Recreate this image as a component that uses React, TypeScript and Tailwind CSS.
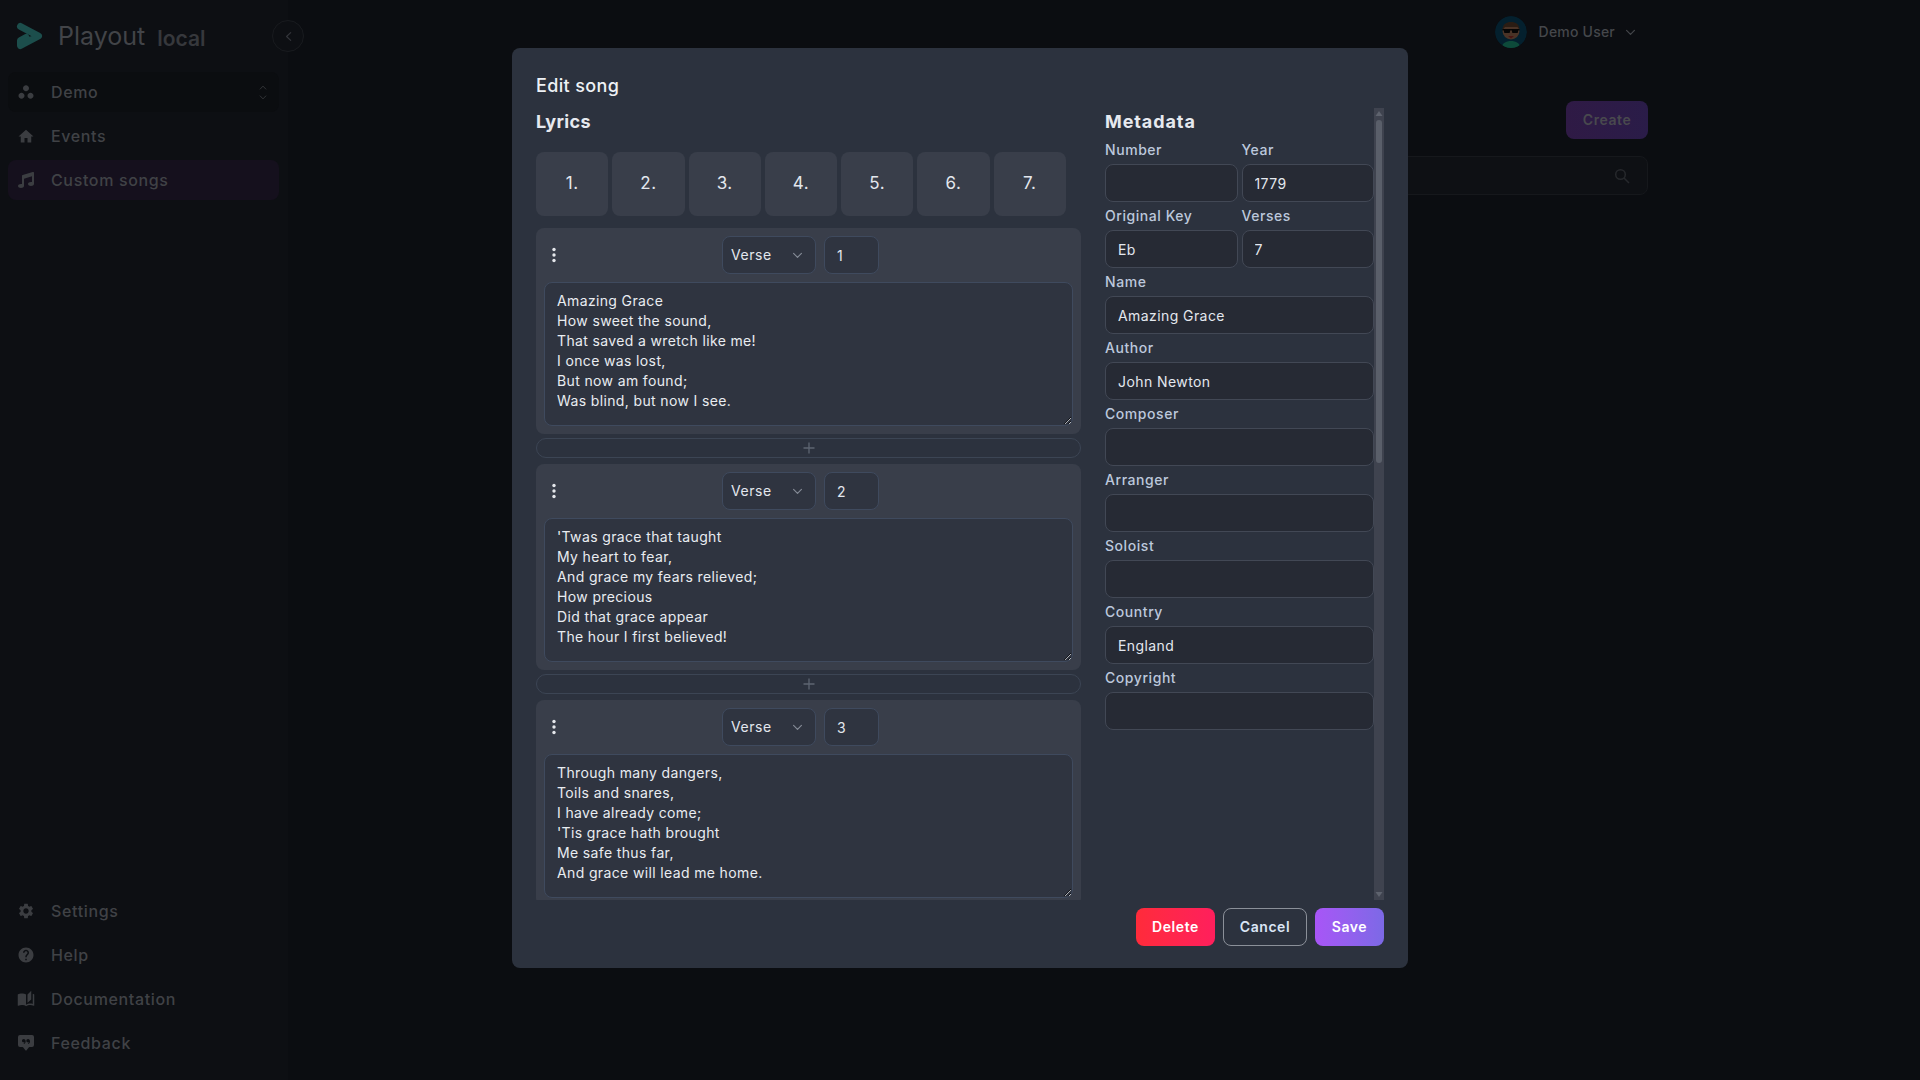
import React from "react";
import { MdWorkspaces, MdHome, MdSettings, MdHelp, MdAutoStories } from "react-icons/md";
import { FaMusic } from "react-icons/fa";
import { BsChatSquareQuoteFill } from "react-icons/bs";

const verses = [
  { n: "1", text: "Amazing Grace\nHow sweet the sound,\nThat saved a wretch like me!\nI once was lost,\nBut now am found;\nWas blind, but now I see." },
  { n: "2", text: "'Twas grace that taught\nMy heart to fear,\nAnd grace my fears relieved;\nHow precious\nDid that grace appear\nThe hour I first believed!" },
  { n: "3", text: "Through many dangers,\nToils and snares,\nI have already come;\n'Tis grace hath brought\nMe safe thus far,\nAnd grace will lead me home." },
];

function Chevron({ className }: { className: string }) {
  return (
    <svg viewBox="0 0 12 8" fill="none" stroke="currentColor" strokeWidth="1.3" strokeLinecap="round" strokeLinejoin="round" className={className}>
      <path d="M1.5 1.5 6 6.2l4.5-4.7" />
    </svg>
  );
}

function Logo() {
  return (
    <svg viewBox="0 0 28 28" className="h-7 w-7 shrink-0">
      <path d="M4.500 4.500 22.500 14 4.500 23.500V18.500L10 15.500" fill="none" stroke="#1c4e4c" strokeWidth="7" strokeLinecap="round" strokeLinejoin="round" />
    </svg>
  );
}

function Avatar() {
  return (
    <svg viewBox="0 0 32 32" className="h-8 w-8 rounded-full">
      <circle cx="16" cy="16" r="16" fill="#04202e" />
      <path d="M7 32c0-5 4-7 9-7s9 2 9 7Z" fill="#0d4a3a" />
      <circle cx="16" cy="15" r="8.500" fill="#4a3326" />
      <path d="M7.500 14c0-6 4-8 8.500-8s8.500 2 8.500 8l-2-3H10Z" fill="#2a1c13" />
      <rect x="7.500" y="13" width="17" height="1.500" fill="#050505" />
      <rect x="9" y="13" width="6" height="4" rx="1" fill="#050505" />
      <rect x="17" y="13" width="6" height="4" rx="1" fill="#050505" />
      <path d="M13 20h6l-3 2.500Z" fill="#4a1512" />
    </svg>
  );
}

function NavItem({ icon, label, active, dark, trailing }: { icon: React.ReactNode; label: string; active?: boolean; dark?: boolean; trailing?: React.ReactNode }) {
  return (
    <div className={`mx-2 flex h-10 w-[271px] items-center gap-4 rounded-lg px-[9px] text-base font-medium tracking-[0.04em] text-[#404246] ${active ? "bg-[#15101d]" : ""} ${dark ? "bg-[#0b0d10]" : ""}`}>
      <span className="flex w-[18px] shrink-0 justify-center text-[#3b3d41]">{icon}</span>
      <span className="flex-1">{label}</span>
      {trailing}
    </div>
  );
}

function Field({ label, value, className }: { label: string; value?: string; className?: string }) {
  return (
    <label className={`block ${className ?? ""}`}>
      <span className="flex h-7 items-center text-sm font-medium text-[#bcc8dc]">{label}</span>
      <input
        readOnly
        defaultValue={value ?? ""}
        className="block h-[38px] w-full rounded-lg border border-[#424855] bg-[#262a34] px-3 text-sm tracking-[0.03em] text-[#e3e7ee] outline-none"
      />
    </label>
  );
}

function VerseCard({ n, text }: { n: string; text: string }) {
  return (
    <div className="h-[206px] shrink-0 rounded-lg bg-[#393e4a] p-2">
      <div className="flex h-[38px] items-center">
        <div className="w-[178px] pl-[2px]">
          <svg viewBox="0 0 16 16" className="h-4 w-4 text-[#e5e7eb]" fill="currentColor">
            <circle cx="8" cy="2.500" r="1.700" />
            <circle cx="8" cy="8" r="1.700" />
            <circle cx="8" cy="13.500" r="1.700" />
          </svg>
        </div>
        <div className="flex h-[38px] w-[94px] items-center justify-between rounded-lg border border-[#3f4a5e] bg-[#2f3440] pl-[8px] pr-[12px] text-sm text-[#e3e7ee]">
          <span>Verse</span>
          <Chevron className="h-[7px] w-[11px] text-[#858b96]" />
        </div>
        <input
          readOnly
          defaultValue={n}
          className="ml-2 h-[38px] w-[55px] rounded-lg border border-[#3f4a5e] bg-[#2f3440] px-3 text-sm text-[#e3e7ee] outline-none"
        />
      </div>
      <textarea
        readOnly
        defaultValue={text}
        className="mt-2 block h-[144px] w-full resize-y rounded-lg border border-[#3f4a5e] bg-[#2f3440] px-3 py-2 text-sm leading-5 tracking-[0.026em] text-[#e9ecf1] outline-none"
      />
    </div>
  );
}

function AddRow() {
  return (
    <div className="mb-1.5 mt-1 flex h-5 shrink-0 items-center justify-center rounded-[10px] border border-[#3c4554]">
      <svg viewBox="0 0 12 12" className="h-3 w-3 text-[#5d6572]" fill="none" stroke="currentColor" strokeWidth="1.300">
        <path d="M6 .5v11M.5 6h11" />
      </svg>
    </div>
  );
}

export default function App() {
  return (
    <div className="relative flex h-screen w-screen overflow-hidden bg-[#0b0d11] font-['Inter',sans-serif] tracking-[0.035em]">
      <aside className="flex h-full w-[288px] shrink-0 flex-col bg-[#0d0f13] pb-[17px]">
        <div className="relative flex h-[72px] items-center pl-4">
          <Logo />
          <span className="ml-[14px] mt-[2px] text-[25px] font-normal tracking-normal text-[#424448]">Playout</span>
          <span className="ml-3 mt-[6px] text-[21px] font-semibold tracking-normal text-[#36383c]">local</span>
          <span className="absolute left-[272px] top-[20px] flex h-8 w-8 items-center justify-center rounded-full border border-[#191b1f] bg-[#0d0f13] text-[#33353a]">
            <Chevron className="h-[7px] w-[11px] rotate-90" />
          </span>
        </div>
        <div className="flex flex-1 flex-col gap-1">
          <NavItem
            dark
            icon={<MdWorkspaces size={20} />}
            label="Demo"
            trailing={
              <span className="mr-[3px] flex flex-col gap-[5px] text-[#3b3d41]">
                <Chevron className="h-[5px] w-2 rotate-180" />
                <Chevron className="h-[5px] w-2" />
              </span>
            }
          />
          <NavItem icon={<MdHome size={19} />} label="Events" />
          <NavItem active icon={<FaMusic size={16} />} label="Custom songs" />
        </div>
        <div className="flex flex-col gap-1">
          <NavItem icon={<MdSettings size={20} />} label="Settings" />
          <NavItem icon={<MdHelp size={20} />} label="Help" />
          <NavItem icon={<MdAutoStories size={20} />} label="Documentation" />
          <NavItem icon={<BsChatSquareQuoteFill size={16} />} label="Feedback" />
        </div>
      </aside>

      <main className="ml-6 w-[1336px]">
        <div className="flex h-[64px] items-center justify-end pr-[12px]">
          <Avatar />
          <span className="ml-[12px] text-sm font-medium tracking-[0.015em] text-[#45474b]">Demo User</span>
          <Chevron className="ml-[10px] h-[7px] w-[11px] text-[#45474b]" />
        </div>
        <div className="mt-[37px] flex justify-end">
          <div className="flex h-[38px] w-[82px] items-center justify-center rounded-lg bg-gradient-to-r from-[#2f1a45] to-[#2a1c48] text-sm font-semibold text-[#49494e]">
            Create
          </div>
        </div>
        <div className="ml-[400px] mt-[17px] flex h-[39px] items-center justify-end rounded-lg border border-[#16181c] bg-[#0e1014] pr-[17px] text-[#26282c]">
          <svg viewBox="0 0 16 16" className="h-4 w-4" fill="none" stroke="currentColor" strokeWidth="1.500">
            <circle cx="6.500" cy="6.500" r="4.800" />
            <path d="m10 10 5 5" />
          </svg>
        </div>
      </main>

      <div className="absolute inset-0 flex items-start justify-center pt-12">
        <div className="flex h-[920px] w-[896px] flex-col rounded-lg bg-[#2c323e] p-6">
          <h2 className="h-7 text-lg font-medium leading-7 tracking-[0.02em] text-[#eef1f5]">Edit song</h2>
          <div className="mt-2 flex h-[792px] gap-6">
            <div className="flex w-[545px] flex-col">
              <h3 className="h-7 text-lg font-bold leading-7 tracking-[0.02em] text-[#e6e9ef]">Lyrics</h3>
              <div className="mt-4 flex w-[530px] gap-1">
                {["1.", "2.", "3.", "4.", "5.", "6.", "7."].map((t) => (
                  <div key={t} className="flex h-16 flex-1 items-center justify-center rounded-lg bg-[#393e4a] text-[17px] text-[#e3e7ee]">
                    {t}
                  </div>
                ))}
              </div>
              <div className="mt-3 flex h-[672px] flex-col overflow-hidden">
                {verses.map((v, i) => (
                  <React.Fragment key={v.n}>
                    <VerseCard n={v.n} text={v.text} />
                    {i < verses.length - 1 && <AddRow />}
                  </React.Fragment>
                ))}
              </div>
            </div>
            <div className="flex h-full w-[279px]">
              <div className="w-[269px]">
                <h3 className="h-7 text-lg font-bold leading-7 tracking-[0.05em] text-[#e6e9ef]">Metadata</h3>
                <div className="grid grid-cols-2 gap-x-1">
                  <Field label="Number" />
                  <Field label="Year" value="1779" />
                  <Field label="Original Key" value="Eb" />
                  <Field label="Verses" value="7" />
                </div>
                <Field label="Name" value="Amazing Grace" />
                <Field label="Author" value="John Newton" />
                <Field label="Composer" />
                <Field label="Arranger" />
                <Field label="Soloist" />
                <Field label="Country" value="England" />
                <Field label="Copyright" />
              </div>
              <div className="flex h-full w-[10px] flex-col items-center bg-[#3f434f]">
                <svg viewBox="0 0 10 12" className="h-3 w-[10px] shrink-0 text-[#5e636e]" fill="currentColor">
                  <path d="M5 3 8.500 8h-7Z" />
                </svg>
                <div className="h-[343px] w-[6px] rounded-full bg-[#5a5f6a]" />
                <div className="flex-1" />
                <svg viewBox="0 0 10 12" className="h-3 w-[10px] shrink-0 text-[#5e636e]" fill="currentColor">
                  <path d="M5 9 8.500 4h-7Z" />
                </svg>
              </div>
            </div>
          </div>
          <div className="mt-2 flex justify-end gap-2 text-sm font-semibold">
            <button className="h-[38px] w-[79px] rounded-lg bg-gradient-to-r from-[#ff2b3a] to-[#ff1f5c] text-white">Delete</button>
            <button className="h-[38px] w-[84px] rounded-lg border border-[#8b9099] text-[#dbe5f5]">Cancel</button>
            <button className="h-[38px] w-[69px] rounded-lg bg-gradient-to-r from-[#a855f7] to-[#7c69e6] text-white">Save</button>
          </div>
        </div>
      </div>
    </div>
  );
}
